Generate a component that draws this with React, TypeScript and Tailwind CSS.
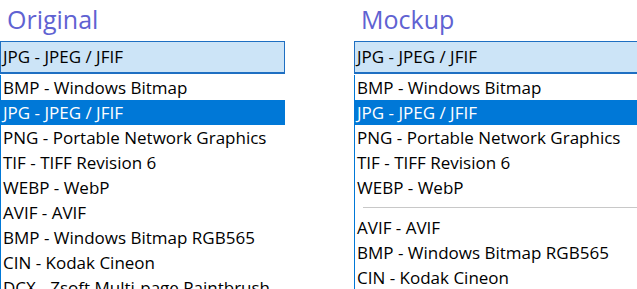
const items = [
  "BMP - Windows Bitmap",
  "JPG - JPEG / JFIF",
  "PNG - Portable Network Graphics",
  "TIF - TIFF Revision 6",
  "WEBP - WebP",
];

const more = [
  "AVIF - AVIF",
  "BMP - Windows Bitmap RGB565",
  "CIN - Kodak Cineon",
  "DCX - Zsoft Multi-page Paintbrush",
];

function Panel({ title, separator }: { title: string; separator?: boolean }) {
  return (
    <div className="w-[285px] shrink-0">
      <h2 className="h-[41px] pl-[7px] pt-[3px] text-[25px] leading-[32px] text-[#6062d2]">{title}</h2>
      <div className="h-[33px] border border-b-2 border-[#1e6fc2] bg-[#cce4f7] pl-[2px] text-[17px] leading-[30px] text-black">
        JPG - JPEG / JFIF
      </div>
      <ul className="mt-[1px] border-l border-[#0078d7] text-[17px] text-black">
        {items.map((item) => (
          <li
            key={item}
            className={
              item === "JPG - JPEG / JFIF"
                ? "h-[25px] bg-[#0078d7] pl-[2px] leading-[25px] text-white"
                : "h-[25px] pl-[2px] leading-[25px]"
            }
          >
            {item}
          </li>
        ))}
        {separator && (
          <li className="flex h-[15px] items-center pl-[8px]">
            <div className="h-px w-full bg-[#c8c8c8]" />
          </li>
        )}
        {more.map((item) => (
          <li key={item} className="h-[25px] whitespace-nowrap pl-[2px] leading-[25px]">
            {item}
          </li>
        ))}
      </ul>
    </div>
  );
}

export default function App() {
  return (
    <div
      className="flex h-[289px] w-[637px] gap-[69px] overflow-hidden bg-white"
      style={{ fontFamily: '"Open Sans", "Noto Sans", sans-serif' }}
    >
      <Panel title="Original" />
      <Panel title="Mockup" separator />
    </div>
  );
}
